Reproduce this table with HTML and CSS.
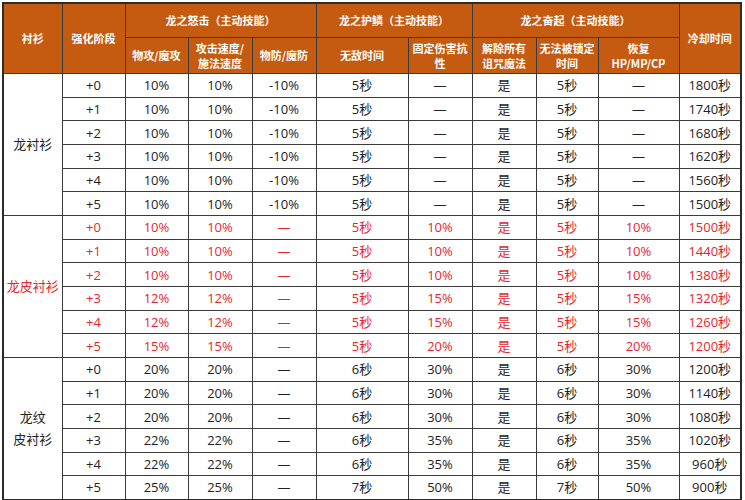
FILE: index.html
```html
<!DOCTYPE html>
<html lang="zh-CN">
<head>
<meta charset="utf-8">
<link rel="stylesheet" href="styles.css">
</head>
<body>
<table class="grid">
<colgroup>
<col class="c1"><col class="c2"><col class="c3"><col class="c4"><col class="c5"><col class="c6"><col class="c7"><col class="c8"><col class="c9"><col class="c10"><col class="c11">
</colgroup>
<thead>
<tr class="h1">
<th rowspan="2">衬衫</th>
<th rowspan="2">强化阶段</th>
<th colspan="3">龙之怒击（主动技能）</th>
<th colspan="2">龙之护鳞（主动技能）</th>
<th colspan="3">龙之奋起（主动技能）</th>
<th rowspan="2">冷却时间</th>
</tr>
<tr class="h2">
<th>物攻/魔攻</th>
<th>攻击速度/<br>施法速度</th>
<th>物防/魔防</th>
<th>无敌时间</th>
<th>固定伤害抗<br>性</th>
<th>解除所有<br>诅咒魔法</th>
<th>无法被锁定<br>时间</th>
<th>恢复<br>HP/MP/CP</th>
</tr>
</thead>
<tbody>
<tr><td rowspan="6">龙衬衫</td><td>+0</td><td>10%</td><td>10%</td><td>-10%</td><td>5秒</td><td>—</td><td>是</td><td>5秒</td><td>—</td><td>1800秒</td></tr>
<tr><td>+1</td><td>10%</td><td>10%</td><td>-10%</td><td>5秒</td><td>—</td><td>是</td><td>5秒</td><td>—</td><td>1740秒</td></tr>
<tr><td>+2</td><td>10%</td><td>10%</td><td>-10%</td><td>5秒</td><td>—</td><td>是</td><td>5秒</td><td>—</td><td>1680秒</td></tr>
<tr><td>+3</td><td>10%</td><td>10%</td><td>-10%</td><td>5秒</td><td>—</td><td>是</td><td>5秒</td><td>—</td><td>1620秒</td></tr>
<tr><td>+4</td><td>10%</td><td>10%</td><td>-10%</td><td>5秒</td><td>—</td><td>是</td><td>5秒</td><td>—</td><td>1560秒</td></tr>
<tr><td>+5</td><td>10%</td><td>10%</td><td>-10%</td><td>5秒</td><td>—</td><td>是</td><td>5秒</td><td>—</td><td>1500秒</td></tr>
</tbody>
<tbody class="red">
<tr><td rowspan="6">龙皮衬衫</td><td>+0</td><td>10%</td><td>10%</td><td>—</td><td>5秒</td><td>10%</td><td>是</td><td>5秒</td><td>10%</td><td>1500秒</td></tr>
<tr><td>+1</td><td>10%</td><td>10%</td><td>—</td><td>5秒</td><td>10%</td><td>是</td><td>5秒</td><td>10%</td><td>1440秒</td></tr>
<tr><td>+2</td><td>10%</td><td>10%</td><td>—</td><td>5秒</td><td>10%</td><td>是</td><td>5秒</td><td>10%</td><td>1380秒</td></tr>
<tr><td>+3</td><td>12%</td><td>12%</td><td>—</td><td>5秒</td><td>15%</td><td>是</td><td>5秒</td><td>15%</td><td>1320秒</td></tr>
<tr><td>+4</td><td>12%</td><td>12%</td><td>—</td><td>5秒</td><td>15%</td><td>是</td><td>5秒</td><td>15%</td><td>1260秒</td></tr>
<tr><td>+5</td><td>15%</td><td>15%</td><td>—</td><td>5秒</td><td>20%</td><td>是</td><td>5秒</td><td>20%</td><td>1200秒</td></tr>
</tbody>
<tbody>
<tr><td rowspan="6" class="two-line">龙纹<br>皮衬衫</td><td>+0</td><td>20%</td><td>20%</td><td>—</td><td>6秒</td><td>30%</td><td>是</td><td>6秒</td><td>30%</td><td>1200秒</td></tr>
<tr><td>+1</td><td>20%</td><td>20%</td><td>—</td><td>6秒</td><td>30%</td><td>是</td><td>6秒</td><td>30%</td><td>1140秒</td></tr>
<tr><td>+2</td><td>20%</td><td>20%</td><td>—</td><td>6秒</td><td>30%</td><td>是</td><td>6秒</td><td>30%</td><td>1080秒</td></tr>
<tr><td>+3</td><td>22%</td><td>22%</td><td>—</td><td>6秒</td><td>35%</td><td>是</td><td>6秒</td><td>35%</td><td>1020秒</td></tr>
<tr><td>+4</td><td>22%</td><td>22%</td><td>—</td><td>6秒</td><td>35%</td><td>是</td><td>6秒</td><td>35%</td><td>960秒</td></tr>
<tr><td>+5</td><td>25%</td><td>25%</td><td>—</td><td>7秒</td><td>50%</td><td>是</td><td>7秒</td><td>50%</td><td>900秒</td></tr>
</tbody>
</table>
</body>
</html>
```

FILE: styles.css
```css
html, body {
  margin: 0;
  padding: 0;
  background: #ffffff;
}
body {
  padding: 2px 0 0 2px;
  font-family: "Open Sans", "Noto Sans CJK SC", sans-serif;
  color: #222222;
}
.grid {
  border-collapse: collapse;
  table-layout: fixed;
  width: 738px;
  border: 2px solid #2b2b2b;
}
.c1 { width: 59px; }
.c2 { width: 63px; }
.c3 { width: 63px; }
.c4 { width: 64px; }
.c5 { width: 64px; }
.c6 { width: 92px; }
.c7 { width: 64px; }
.c8 { width: 64px; }
.c9 { width: 62px; }
.c10 { width: 81px; }
.c11 { width: 62px; }
.grid th, .grid td {
  border: 1px solid #3a3a3a;
  text-align: center;
  vertical-align: middle;
  padding: 0;
}
.grid th {
  background: #c55a11;
  color: #ffffff;
  font-weight: bold;
  font-size: 11px;
  line-height: 15px;
  font-family: "Noto Sans CJK SC", "Open Sans", sans-serif;
}
.h1 th { height: 33px; }
.h2 th { height: 35px; }
.grid td {
  height: 22.67px;
  font-size: 13px;
  line-height: 16px;
}
.grid td.two-line {
  line-height: 22px;
}
.red td { color: #e3262e; }
```
